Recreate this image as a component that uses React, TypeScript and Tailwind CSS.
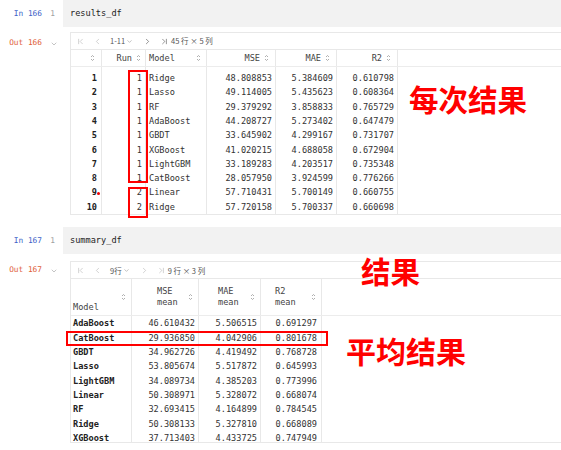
import { ChevronDown, ChevronFirst, ChevronLast, ChevronLeft, ChevronRight } from "lucide-react";

const RESULTS = [
  ["1", "1", "Ridge", "48.808853", "5.384609", "0.610798"],
  ["2", "1", "Lasso", "49.114005", "5.435623", "0.608364"],
  ["3", "1", "RF", "29.379292", "3.858833", "0.765729"],
  ["4", "1", "AdaBoost", "44.208727", "5.273402", "0.647479"],
  ["5", "1", "GBDT", "33.645902", "4.299167", "0.731707"],
  ["6", "1", "XGBoost", "41.020215", "4.688058", "0.672904"],
  ["7", "1", "LightGBM", "33.189283", "4.203517", "0.735348"],
  ["8", "1", "CatBoost", "28.057950", "3.924599", "0.776266"],
  ["9", "2", "Linear", "57.710431", "5.700149", "0.660755"],
  ["10", "2", "Ridge", "57.720158", "5.700337", "0.660698"],
];

const SUMMARY = [
  ["AdaBoost", "46.610432", "5.506515", "0.691297"],
  ["CatBoost", "29.936850", "4.042906", "0.801678"],
  ["GBDT", "34.962726", "4.419492", "0.768728"],
  ["Lasso", "53.805674", "5.517872", "0.645993"],
  ["LightGBM", "34.089734", "4.385203", "0.773996"],
  ["Linear", "50.308971", "5.328072", "0.668074"],
  ["RF", "32.693415", "4.164899", "0.784545"],
  ["Ridge", "50.308133", "5.327810", "0.668089"],
  ["XGBoost", "37.713403", "4.433725", "0.747949"],
];

const CJK = "font-['Noto_Sans_CJK_SC','Noto_Sans',sans-serif]";

function SortIcon() {
  return (
    <svg width="5" height="8" viewBox="0 0 5 8" className="shrink-0">
      <path d="M1 3 L2.5 1.5 L4 3 M1 5 L2.5 6.5 L4 5" fill="none" stroke="#9a9a9a" strokeWidth="0.8" />
    </svg>
  );
}

function Toolbar({ range, next, info }: { range: string; next: boolean; info: string }) {
  const nav = next ? "size-[9px] text-[#444]" : "size-[9px] text-[#b0b0b0]";
  return (
    <div className={`flex h-[17px] items-center border-b border-[#e8e8e8] pl-[5px] text-[7.5px] text-[#555] ${CJK}`}>
      <ChevronFirst className="size-[9px] text-[#b0b0b0]" strokeWidth={1.5} />
      <ChevronLeft className="ml-[8px] size-[9px] text-[#b0b0b0]" strokeWidth={1.5} />
      <span className="ml-[8px] flex items-center">
        {range}
        <ChevronDown className="ml-[1px] size-[7px] text-[#777]" strokeWidth={1.5} />
      </span>
      <span className="ml-[10px] flex items-center">
        <ChevronRight className={nav} strokeWidth={1.5} />
      </span>
      <span className="ml-[8px] flex items-center">
        <ChevronLast className={nav} strokeWidth={1.5} />
      </span>
      <span className="ml-[2px]">{info}</span>
    </div>
  );
}

function Prompt({ n }: { n: number }) {
  return (
    <div className="flex h-[27px]">
      <div className="flex w-[63px] shrink-0 items-center text-[7.8px]">
        <span className="w-[42px] text-right text-[#3d62c8]">In {n}</span>
        <span className="w-[21px] text-center text-[#a0a0a0]">1</span>
      </div>
      <div className="flex flex-1 items-center bg-[#f2f2f2] pl-[7px] text-[#222]">
        {n === 166 ? "results_df" : "summary_df"}
      </div>
    </div>
  );
}

function OutLabel({ n, top }: { n: number; top: string }) {
  return (
    <div className={`flex w-[70px] shrink-0 items-start text-[7.8px] ${top}`}>
      <span className="w-[42px] text-right text-[#e0603a]">Out {n}</span>
      <ChevronDown className="ml-[8px] mt-[1px] size-[8px] text-[#888]" strokeWidth={1.5} />
    </div>
  );
}

export default function App() {
  return (
    <div className="relative h-[450px] w-[561px] overflow-hidden bg-white font-['DejaVu_Sans_Mono',monospace] text-[8.6px] leading-none text-[#333]">
      <Prompt n={166} />

      {/* results_df */}
      <div className="mt-[5px] flex">
        <OutLabel n={166} top="pt-[7px]" />
        <div className="flex-1 border-y border-l border-[#e8e8e8]">
          <Toolbar range="1-11" next info="45 行 × 5 列" />
          <div className="flex h-[17px] border-b border-[#ececec] text-[#444]">
            <div className="flex w-[31px] items-center justify-end border-r border-[#e8e8e8] pr-[6px]">
              <SortIcon />
            </div>
            <div className="flex w-[44px] items-center justify-end gap-[4px] border-r border-[#e8e8e8] pr-[4px]">
              Run <SortIcon />
            </div>
            <div className="flex w-[61px] items-center justify-between border-r border-[#e8e8e8] pl-[3px] pr-[5px]">
              Model <SortIcon />
            </div>
            <div className="flex w-[69px] items-center justify-end gap-[4px] border-r border-[#e8e8e8] pr-[6px]">
              MSE <SortIcon />
            </div>
            <div className="flex w-[61px] items-center justify-end gap-[4px] border-r border-[#e8e8e8] pr-[6px]">
              MAE <SortIcon />
            </div>
            <div className="flex w-[61px] items-center justify-end gap-[4px] border-r border-[#e8e8e8] pr-[6px]">
              R2 <SortIcon />
            </div>
          </div>
          {[["", "", "", "", "", ""], ...RESULTS].map((r, i) => (
            <div key={i} className={i === 0 ? "flex h-[4px]" : "flex h-[14.33px]"}>
              <div className="flex w-[31px] items-center justify-end border-r border-[#e8e8e8] pr-[4px] font-bold text-[#222]">
                {r[0]}
              </div>
              <div className="flex w-[44px] items-center justify-end border-r border-[#e8e8e8] pr-[3px]">{r[1]}</div>
              <div className="flex w-[61px] items-center border-r border-[#e8e8e8] pl-[3px]">{r[2]}</div>
              <div className="flex w-[69px] items-center justify-end border-r border-[#e8e8e8] pr-[3px]">{r[3]}</div>
              <div className="flex w-[61px] items-center justify-end border-r border-[#e8e8e8] pr-[3px]">{r[4]}</div>
              <div className="flex w-[61px] items-center justify-end border-r border-[#e8e8e8] pr-[3px]">{r[5]}</div>
            </div>
          ))}
        </div>
      </div>

      <div className="mt-[12px]">
        <Prompt n={167} />
      </div>

      {/* summary_df */}
      <div className="mt-[7px] flex">
        <OutLabel n={167} top="pt-[5px]" />
        <div className="h-[182px] flex-1 overflow-hidden border-y border-l border-[#e8e8e8]">
          <Toolbar range="9行" next={false} info="9 行 × 3 列" />
          <div className="flex h-[37px] border-b border-[#ececec] text-[#444]">
            <div className="relative flex w-[61px] items-center justify-end border-r border-[#e8e8e8] pr-[5px]">
              <SortIcon />
              <span className="absolute bottom-[4px] left-[2px]">Model</span>
            </div>
            <div className="flex w-[67px] items-center border-r border-[#e8e8e8] pl-[25px] pr-[5px]">
              <span className="leading-[11px]">MSE<br />mean</span>
              <span className="ml-auto"><SortIcon /></span>
            </div>
            <div className="flex w-[62px] items-center border-r border-[#e8e8e8] pl-[19px] pr-[5px]">
              <span className="leading-[11px]">MAE<br />mean</span>
              <span className="ml-auto"><SortIcon /></span>
            </div>
            <div className="flex w-[61px] items-center border-r border-[#e8e8e8] pl-[14px] pr-[5px]">
              <span className="leading-[11px]">R2<br />mean</span>
              <span className="ml-auto"><SortIcon /></span>
            </div>
          </div>
          {SUMMARY.map((r) => (
            <div key={r[0]} className="flex h-[14.35px]">
              <div className="flex w-[61px] items-center border-r border-[#e8e8e8] pl-[2px] font-bold text-[#222]">{r[0]}</div>
              <div className="flex w-[67px] items-center justify-end border-r border-[#e8e8e8] pr-[3px]">{r[1]}</div>
              <div className="flex w-[62px] items-center justify-end border-r border-[#e8e8e8] pr-[3px]">{r[2]}</div>
              <div className="flex w-[61px] items-center justify-end border-r border-[#e8e8e8] pr-[4px]">{r[3]}</div>
            </div>
          ))}
        </div>
      </div>

      {/* red annotations */}
      <div className="absolute left-[128px] top-[70px] h-[113px] w-[20px] border-2 border-[#f00]" />
      <div className="absolute left-[128px] top-[187px] h-[31px] w-[20px] border-2 border-[#f00]" />
      <div className="absolute left-[97px] top-[192px] size-[3px] rounded-full bg-[#e00]" />
      <div className="absolute left-[66px] top-[331px] h-[15px] w-[262px] border-2 border-[#f00]" />
      <div className={`absolute left-[409px] top-[84px] text-[29.5px] font-bold leading-none text-[#f00] ${CJK}`}>每次结果</div>
      <div className={`absolute left-[361px] top-[256px] text-[29.5px] font-bold leading-none text-[#f00] ${CJK}`}>结果</div>
      <div className={`absolute left-[346px] top-[335px] text-[30px] font-bold leading-none text-[#f00] ${CJK}`}>平均结果</div>
    </div>
  );
}
